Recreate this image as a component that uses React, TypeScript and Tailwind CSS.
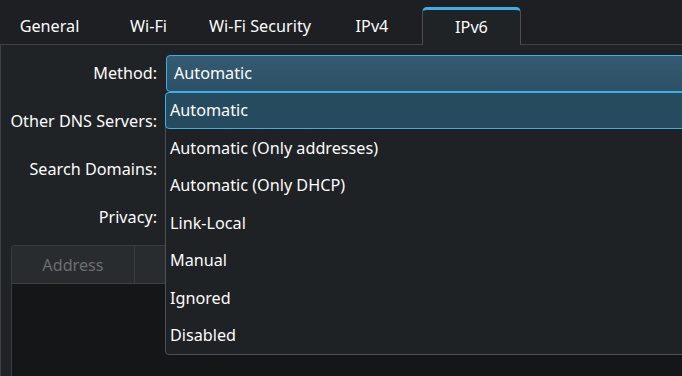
const tabs = [
  { label: 'General', w: 'w-[99px]' },
  { label: 'Wi-Fi', w: 'w-[99px]' },
  { label: 'Wi-Fi Security', w: 'w-[124px]' },
  { label: 'IPv4', w: 'w-[100px]' },
];

const methods = [
  'Automatic',
  'Automatic (Only addresses)',
  'Automatic (Only DHCP)',
  'Link-Local',
  'Manual',
  'Ignored',
  'Disabled',
];

function TabBar() {
  return (
    <div className="flex items-end h-[45px] shrink-0 bg-[#1d1f22] border-b border-[#3f4245]">
      {tabs.map((t) => (
        <div key={t.label} className={`${t.w} h-[38px] pt-[3px] flex items-center justify-center text-[#fcfcfc]`}>
          {t.label}
        </div>
      ))}
      <div className="w-[99px] h-[38px] -mb-px flex items-center justify-center bg-[#202326] text-[#fcfcfc] border-t-[3px] border-t-[#3daee9] border-x border-x-[#4b4e52] rounded-t-[5px]">
        IPv6
      </div>
    </div>
  );
}

function Field() {
  return <div className="h-[37px] rounded-[4px] border border-[#45484c] bg-[#1b1e20]" />;
}

function MethodPopup() {
  return (
    <div className="absolute left-[165px] top-[92px] w-[530px] h-[263px] bg-[#1f2225] border border-[#4c4f53] rounded-[4px] flex flex-col">
      {methods.map((m, i) => (
        <div
          key={m}
          className={
            i === 0
              ? 'h-[37px] shrink-0 -ml-px -mt-px flex items-center pl-[4px] bg-[#264b5f] border border-[#3daee9] rounded-[4px] text-[#fcfcfc]'
              : 'h-[37.5px] shrink-0 flex items-center pl-[4px] text-[#fcfcfc]'
          }
        >
          {m}
        </div>
      ))}
    </div>
  );
}

export default function App() {
  return (
    <div className="relative w-[682px] h-[376px] overflow-hidden bg-[#202326] font-['Noto_Sans',sans-serif] text-[16.2px] leading-none flex flex-col">
      <TabBar />
      <div className="flex-1 flex flex-col border-l border-[#3f4245] pt-[10px]">
        <div className="grid grid-cols-[156px_1fr] gap-x-[9px] gap-y-[11px] items-center text-[#fcfcfc]">
          <div className="text-right">Method:</div>
          <div className="h-[37px] rounded-[4px] border border-[#3daee9] bg-gradient-to-b from-[#345b72] to-[#2d5065] flex items-center pl-[7px] -mr-4">
            Automatic
          </div>
          <div className="text-right">Other DNS Servers:</div>
          <Field />
          <div className="text-right">Search Domains:</div>
          <Field />
          <div className="text-right">Privacy:</div>
          <Field />
        </div>
        <div className="flex-1 mt-[9px] ml-[10px] -mr-4 flex flex-col border-l border-t border-[#3a3d40] rounded-tl-[4px] overflow-hidden">
          <div className="h-[38px] shrink-0 flex bg-[#292c2f] border-b border-[#3c3f43]">
            <div className="w-[123px] pt-[2px] flex items-center justify-center border-r border-[#383b3e] text-[#6b6e72]">
              Address
            </div>
            <div className="flex-1" />
          </div>
          <div className="flex-1 bg-[#141618]" />
        </div>
      </div>
      <MethodPopup />
    </div>
  );
}
